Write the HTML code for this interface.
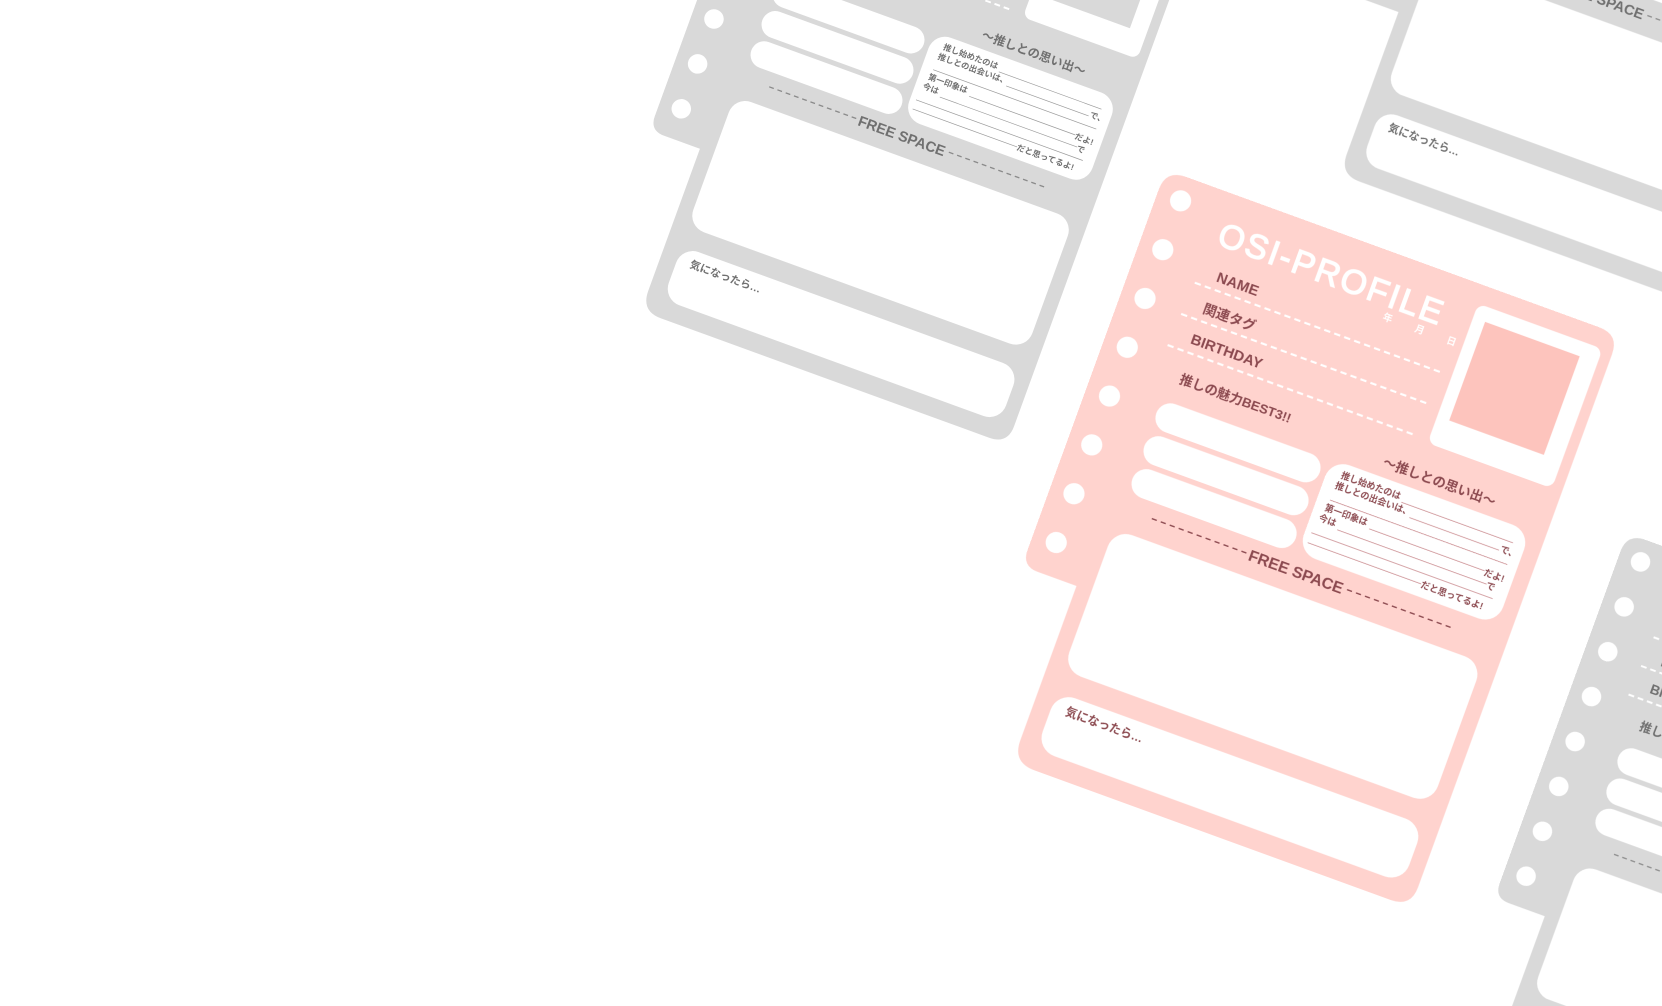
<!DOCTYPE html>
<html><head><meta charset="utf-8"><style>
html,body{margin:0;padding:0;background:#fff;overflow:hidden;width:1662px;height:1006px}
#clip{position:relative;width:1662px;height:1006px;overflow:hidden}
#w{position:absolute;left:0;top:0;width:1568px;height:949px;transform:scale(1.06);transform-origin:0 0}
.card{position:absolute;width:470px;height:590px;transform-origin:0 0}
.card svg{overflow:hidden}
.pink{--bg:#ffd3ce;--tx:#8c4a50;--in:#fdc4bd;--ln:#c9898d;--fd:#8c4a50}
.gray{--bg:#d9d9d9;--tx:#707070;--in:#d9d9d9;--ln:#9a9a9a;--fd:#8a8a8a}
.bg{fill:var(--bg)}.in{fill:var(--in)}
.tx{fill:var(--tx);font-family:"Liberation Sans","Noto Sans CJK JP",sans-serif;font-weight:bold}
.ln{stroke:var(--ln);stroke-width:.7}
.fd{stroke:var(--fd);stroke-width:1.3;stroke-dasharray:5 4}
.wd{stroke:#fff;stroke-width:2;stroke-dasharray:6 4}
.ti{fill:#fff;stroke:#fff;stroke-width:1.2;font-family:"Liberation Sans",sans-serif;font-size:32px;letter-spacing:1px}
.dt{fill:#fff;font-family:"Noto Sans CJK JP",sans-serif;font-size:9px;font-weight:bold}
</style></head><body><div id="clip"><div id="w"></div></div>
<script>
var tpl='<svg width="470" height="590" viewBox="0 0 470 590">'+
'<path class="bg" d="M20,0 H435 Q455,0 455,20 V555 Q455,575 435,575 H77 Q55,575 55,553 V398 H16 Q0,398 0,382 V20 Q0,0 20,0 Z"/>'+
[0,1,2,3,4,5,6,7].map(function(k){return '<circle cx="23" cy="'+(23+49*k)+'" r="10" fill="#fff"/>'}).join('')+
'<text class="ti" x="68" y="50" textLength="224">OSI-PROFILE</text>'+
'<text class="dt" x="240" y="63">年</text><text class="dt" x="272" y="63">月</text><text class="dt" x="304" y="63">日</text>'+
'<text class="tx" x="80" y="83" font-size="14">NAME</text><line class="wd" x1="62" y1="91" x2="312" y2="91"/>'+
'<text class="tx" x="78" y="115" font-size="13">関連タグ</text><line class="wd" x1="60" y1="123" x2="310" y2="123"/>'+
'<text class="tx" x="77" y="146" font-size="14">BIRTHDAY</text><line class="wd" x1="58" y1="155" x2="308" y2="155"/>'+
'<text class="tx" x="80" y="185" font-size="12.5">推しの魅力BEST3!!</text>'+
'<rect x="70" y="205" width="164" height="28" rx="14" fill="#fff"/>'+
'<rect x="70" y="238" width="164" height="28" rx="14" fill="#fff"/>'+
'<rect x="70" y="271" width="164" height="28" rx="14" fill="#fff"/>'+
'<rect x="320" y="18" width="125" height="140" rx="8" fill="#fff"/>'+
'<rect class="in" x="332" y="32" width="95" height="99"/>'+
'<text class="tx" x="287" y="193" font-size="12.5">〜推しとの思い出〜</text>'+
'<rect x="240" y="203" width="200" height="94" rx="18" fill="#fff"/>'+
'<g class="tx" font-size="8.5">'+
'<text x="254" y="217">推し始めたのは</text><line class="ln" x1="316" y1="219" x2="428" y2="219"/>'+
'<text x="252" y="228">推しとの出会いは、</text><line class="ln" x1="328" y1="230" x2="418" y2="230"/><text x="419" y="231">で、</text>'+
'<line class="ln" x1="252" y1="240" x2="430" y2="240"/>'+
'<text x="250" y="251">第一印象は</text><line class="ln" x1="296" y1="253" x2="412" y2="253"/><text x="412" y="257">だよ!</text>'+
'<text x="248" y="262">今は</text><line class="ln" x1="268" y1="264" x2="418" y2="264"/><text x="418" y="268">で</text>'+
'<line class="ln" x1="246" y1="275" x2="428" y2="275"/>'+
'<line class="ln" x1="246" y1="285" x2="360" y2="285"/><text x="360" y="288">だと思ってるよ!</text>'+
'</g>'+
'<line class="fd" x1="100" y1="314" x2="196" y2="314"/>'+
'<text class="tx" x="198" y="320" font-size="15" textLength="94">FREE SPACE</text>'+
'<line class="fd" x1="296" y1="314" x2="400" y2="314"/>'+
'<rect x="70" y="335" width="370" height="142" rx="18" fill="#fff"/>'+
'<rect x="72" y="498" width="368" height="58" rx="18" fill="#fff"/>'+
'<text class="tx" x="86" y="516" font-size="11">気になったら…</text>'+
'</svg>';
var cards=[['gray',738,-221,0.92],['gray',1397,-350,0.92],['gray',1535,503,0.92],['pink',1100,160,1]];
var h='';cards.forEach(function(c){h+='<div class="card '+c[0]+'" style="left:'+c[1]+'px;top:'+c[2]+'px;transform:rotate(20deg) scale('+c[3]+')">'+tpl+'</div>'});
document.getElementById('w').innerHTML=h;
</script>
</body></html>
